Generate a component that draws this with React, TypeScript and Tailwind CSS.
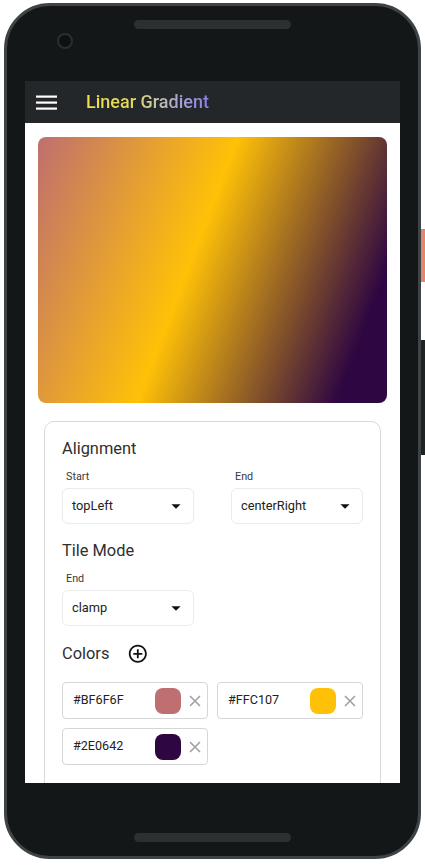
import React from "react";

function Dropdown({ label, value }: { label: string; value: string }) {
  return (
    <div className="flex flex-col">
      <div className="pl-[4px] text-[10.8px] leading-[14px] text-[#3a3a3a]">{label}</div>
      <div className="mt-[4px] h-[36px] border border-[#ebebeb] rounded-[6px] flex items-center justify-between pl-[9px] pr-[6px] text-[12.8px] text-[#222]">
        <span>{value}</span>
        <svg width="22" height="22" viewBox="0 0 24 24">
          <path d="M7 10l5 5 5-5z" fill="#111" />
        </svg>
      </div>
    </div>
  );
}

function Chip({ hex }: { hex: string }) {
  return (
    <div className="h-[37px] border border-[#d6d6d6] rounded-[4px] flex items-center pl-[10px] pr-[6px]">
      <span className="flex-1 text-[12.6px] text-[#222]">#{hex}</span>
      <div className="w-[26px] h-[26px] rounded-[8px]" style={{ backgroundColor: `#${hex}` }} />
      <svg className="ml-[8px]" width="12" height="12" viewBox="0 0 12 12">
        <path d="M1 1L11 11M11 1L1 11" stroke="#9e9e9e" strokeWidth="1.5" />
      </svg>
    </div>
  );
}

export default function App() {
  return (
    <div className="relative w-[425px] h-[866px] bg-white overflow-hidden pl-[4px] pt-[3px] font-['Roboto','Noto_Sans',sans-serif]">
      <div className="w-[417px] h-[856px] rounded-[46px] border-[3px] border-[#3d4346] bg-[#141718] flex flex-col">
        <div className="h-[75px] shrink-0 flex flex-col">
          <div className="self-center mt-[14px] w-[157px] h-[9px] rounded-full bg-[#2c3032]" />
          <div className="ml-[50px] mt-[4px] w-[16px] h-[16px] rounded-full border-[2px] border-[#2b2f31] bg-[#0e1011]" />
        </div>
        <div className="self-center w-[375px] h-[702px] shrink-0 bg-white overflow-hidden flex flex-col">
          <div className="h-[42px] shrink-0 bg-[#24272a] flex items-center pl-[11px]">
            <svg width="21" height="15" viewBox="0 0 21 15">
              <rect x="0" y="0.5" width="21" height="2.2" fill="#fff" />
              <rect x="0" y="6.5" width="21" height="2.2" fill="#fff" />
              <rect x="0" y="12.5" width="21" height="2.2" fill="#fff" />
            </svg>
            <span className="ml-[29px] text-[18px] font-medium leading-[24px] bg-[linear-gradient(90deg,#f0e24a_0%,#dfd75e_38%,#c8c5b4_58%,#a6a2d2_76%,#8680e8_100%)] bg-clip-text text-transparent">
              Linear Gradient
            </span>
          </div>
          <div className="px-[13px] pt-[14px]">
            <div className="h-[266px] rounded-[8px] bg-[linear-gradient(110.86deg,#BF6F6F_0%,#FFC107_44.4%,#2E0642_88.8%)]" />
            <div className="mx-[6px] mt-[18px] border border-[#d9d9d9] rounded-[10px] px-[17px] pt-[15px] pb-[40px]">
              <div className="text-[16.4px] leading-[24px] text-[#2f2f2f]">Alignment</div>
              <div className="mt-[9px] grid grid-cols-2 gap-x-[37px]">
                <Dropdown label="Start" value="topLeft" />
                <Dropdown label="End" value="centerRight" />
              </div>
              <div className="mt-[15px] text-[16.4px] leading-[24px] text-[#2f2f2f]">Tile Mode</div>
              <div className="mt-[9px] grid grid-cols-2 gap-x-[37px]">
                <Dropdown label="End" value="clamp" />
              </div>
              <div className="mt-[14px] h-[28px] flex items-center">
                <span className="text-[16.4px] leading-[24px] text-[#2f2f2f]">Colors</span>
                <svg className="ml-[18px]" width="21.6" height="21.6" viewBox="0 0 24 24">
                  <path
                    d="M13 7h-2v4H7v2h4v4h2v-4h4v-2h-4V7zm-1-5C6.48 2 2 6.48 2 12s4.48 10 10 10 10-4.48 10-10S17.52 2 12 2zm0 18c-4.41 0-8-3.59-8-8s3.59-8 8-8 8 3.59 8 8-3.59 8-8 8z"
                    fill="#111"
                  />
                </svg>
              </div>
              <div className="mt-[14px] grid grid-cols-2 gap-[9px]">
                <Chip hex="BF6F6F" />
                <Chip hex="FFC107" />
                <Chip hex="2E0642" />
              </div>
            </div>
          </div>
        </div>
        <div className="self-center mt-[50px] w-[157px] h-[9px] rounded-full bg-[#2c3032]" />
      </div>
      <div className="absolute left-[421px] top-[229px] w-[4px] h-[53px] bg-[#e2876a]" />
      <div className="absolute left-[421px] top-[340px] w-[4px] h-[115px] bg-[#1f2324]" />
    </div>
  );
}
